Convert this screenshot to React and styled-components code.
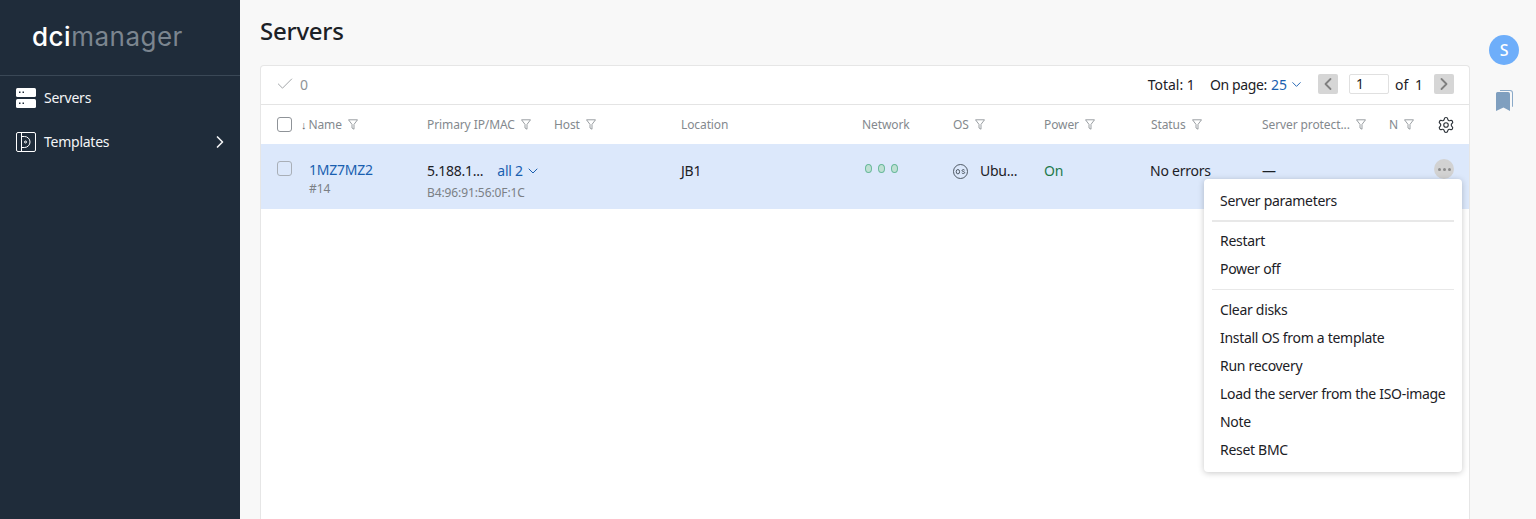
import React from 'react'
import styled, { createGlobalStyle } from 'styled-components'
import { Check, ChevronDown, ChevronLeft, ChevronRight, Settings } from 'lucide-react'

const GlobalStyle = createGlobalStyle`
    html, body {
        margin: 0;
        height: 100%;
        overflow: hidden;
    }
    body {
        font-family: "Noto Sans", "Open Sans", sans-serif;
        font-size: 14px;
        letter-spacing: -0.25px;
        color: #1c2126;
        background: #f8f8f8;
    }
    #root { height: 100%; }
`

const Page = styled.div`
    display: flex;
    height: 519px;
`

const Sidebar = styled.aside`
    width: 240px;
    flex-shrink: 0;
    background: #1f2c3a;
    color: #fff;
`

const LogoBox = styled.div`
    height: 76px;
    padding-left: 32px;
    box-sizing: border-box;
    border-bottom: 1px solid #3a4856;
    font-family: "Inter", sans-serif;
    font-size: 26px;
    font-weight: 500;
    line-height: 73px;
    letter-spacing: 0.5px;
`

const LogoDim = styled.span`
    color: #7b858f;
    font-weight: 400;
`

const NavList = styled.nav`
    display: flex;
    flex-direction: column;
`

const NavItem = styled.div`
    display: flex;
    align-items: center;
    height: 44px;
    padding: 0 10px 0 16px;
    gap: 8px;
    font-size: 14px;
    color: #f4f5f6;
`

const NavLabel = styled.span`
    flex: 1;
    padding-bottom: 2px;
`

const Main = styled.main`
    flex: 1;
    min-width: 0;
    display: flex;
    flex-direction: column;
    padding: 0 0 0 20px;
`

const Title = styled.h1`
    margin: 0;
    height: 65px;
    font-size: 24px;
    font-weight: 500;
    line-height: 62px;
    color: #1c2126;
`

const Card = styled.section`
    position: relative;
    flex: 1;
    background: #fff;
    border: 1px solid #e6e6e6;
    border-bottom: 0;
    border-radius: 4px 4px 0 0;
`

const Toolbar = styled.div`
    display: flex;
    align-items: center;
    height: 36px;
    padding: 0 15px 2px 14px;
    border-bottom: 1px solid #e4e4e4;
    letter-spacing: 0;
`

const Selected = styled.div`
    display: flex;
    align-items: center;
    gap: 5px;
    flex: 1;
    color: #8f9498;
    font-size: 14px;
`

const Pager = styled.div`
    display: flex;
    align-items: center;
    font-size: 14px;
`

const Total = styled.span`
    margin-right: 15px;
`

const OnPage = styled.span`
    letter-spacing: -0.35px;
`

const PerPage = styled.span`
    display: flex;
    align-items: center;
    gap: 2px;
    margin: 0 14px 0 4px;
    color: #1a5fb0;
`

const PageBtn = styled.span`
    display: flex;
    align-items: center;
    justify-content: center;
    width: 20px;
    height: 20px;
    border-radius: 2px;
    background: #d6d6d6;
    color: #808080;
`

const PageInput = styled.span`
    width: 40px;
    height: 20px;
    margin: 0 6px 0 11px;
    padding-left: 6px;
    box-sizing: border-box;
    border: 1px solid #e0e0e0;
    border-radius: 2px;
    line-height: 18px;
`

const OfText = styled.span`
    margin-right: 11px;
    word-spacing: 3px;
`

const Columns = styled.div`
    display: grid;
    grid-template-columns: 40px 126px 127px 127px 181px 91px 91px 107px 111px 127px 49px 1fr;
`

const HeadRow = styled(Columns)`
    height: 39px;
    align-items: center;
    color: #84898e;
    font-size: 12px;
    letter-spacing: -0.1px;
`

const HeadCell = styled.div`
    display: flex;
    align-items: center;
    gap: 6px;
    white-space: nowrap;
`

const GearCell = styled(HeadCell)`
    margin-left: -1px;
`

const SortArrow = styled.span`
    margin-right: -4px;
    font-size: 11px;
    color: #5f6469;
`

const BoxCell = styled.div`
    display: flex;
    justify-content: flex-start;
    padding-left: 16px;
`

const CheckBox = styled.span`
    display: block;
    width: 13px;
    height: 13px;
    border: 1px solid ${p => p.$soft ? '#a9afb7' : '#8f9398'};
    border-radius: 3px;
`

const DataRow = styled(Columns)`
    height: 65px;
    background: #dce8fb;
    font-size: 14px;
`

const Cell = styled.div`
    padding-top: ${p => p.$top || 17}px;
    margin-left: ${p => p.$shift || 0}px;
    white-space: nowrap;
    box-sizing: border-box;
`

const NameLink = styled.div`
    color: #1a5fb0;
    padding-left: 8px;
`

const Sub = styled.div`
    margin-top: ${p => p.$gap}px;
    padding-left: ${p => p.$pad || 0}px;
    font-size: 12px;
    letter-spacing: -0.1px;
    color: #7b8085;
`

const IpLine = styled.div`
    display: flex;
    align-items: center;
    gap: 14px;
`

const AllLink = styled.span`
    display: flex;
    align-items: center;
    gap: 2px;
    color: #1a5fb0;
`

const NetDots = styled.div`
    display: flex;
    gap: 6px;
    padding: 3px 0 0 3px;
`

const NetDot = styled.span`
    width: 7px;
    height: 9px;
    box-sizing: border-box;
    border: 1.5px solid #69b99a;
    border-radius: 50%;
    background: #bfe0d3;
`

const OsLine = styled.div`
    display: flex;
    gap: 12px;

    svg {
        margin-top: 3px;
    }
`

const OnText = styled.span`
    color: #1f7a4b;
`

const DotsBtn = styled.span`
    display: flex;
    align-items: center;
    justify-content: center;
    gap: 2px;
    width: 20px;
    height: 20px;
    margin-top: -2px;
    border-radius: 50%;
    background: #d2d2d2;
`

const Dot = styled.span`
    width: 3px;
    height: 3px;
    border-radius: 50%;
    background: #8b8b8b;
`

const Menu = styled.div`
    position: absolute;
    top: 113px;
    left: 943px;
    width: 258px;
    height: 293px;
    padding-top: 8px;
    box-sizing: border-box;
    background: #fff;
    border-radius: 4px;
    box-shadow: 0 1px 6px rgba(0, 0, 0, 0.22);
    letter-spacing: -0.3px;
`

const MenuItem = styled.div`
    height: 28px;
    padding-left: 16px;
    line-height: 28px;
    font-size: 14px;
    white-space: nowrap;
`

const MenuLine = styled.div`
    height: 1.5px;
    margin: 5.4px 8px 5.5px;
    background: #e8e8e8;
`

const Rail = styled.aside`
    width: 66px;
    flex-shrink: 0;
    display: flex;
    flex-direction: column;
    align-items: center;
    box-sizing: border-box;
    padding: 35px 0 0 2px;
    gap: 25px;
`

const Avatar = styled.div`
    width: 30px;
    height: 30px;
    border-radius: 50%;
    background: #6eaefa;
    color: #fff;
    font-size: 16px;
    font-weight: 500;
    line-height: 30px;
    text-align: center;
`

const FilterIcon = () => (
    <svg width="10" height="11" viewBox="0 0 10 11" fill="none" stroke="#8f9498" strokeWidth="0.9">
        <path d="M0.5 0.8h9L6 5.4v4.8L4 9V5.4z" />
    </svg>
)

const ServerIcon = () => (
    <svg width="20" height="20" viewBox="0 0 20 20">
        <rect y="0" width="20" height="9" rx="1.5" fill="#fff" />
        <rect y="11" width="20" height="9" rx="1.5" fill="#fff" />
        <g fill="#1f2c3a">
            <rect x="3" y="3.5" width="1.5" height="1.5" />
            <rect x="6.5" y="3.5" width="1.5" height="1.5" />
            <rect x="3" y="14.5" width="1.5" height="1.5" />
            <rect x="6.5" y="14.5" width="1.5" height="1.5" />
        </g>
    </svg>
)

const TemplateIcon = () => (
    <svg width="20" height="20" viewBox="0 0 20 20" fill="none" stroke="#fff" strokeWidth="1">
        <rect x="0.5" y="0.5" width="19" height="19" rx="1.5" />
        <path d="M5.5 0.5v19" />
        <path d="M5.5 4.5h3a5.5 5.5 0 0 1 0 11h-3" />
        <circle cx="9.5" cy="10" r="1" />
    </svg>
)

const OsIcon = () => (
    <svg width="15" height="15" viewBox="0 0 15 15" fill="none" stroke="#3f4954" strokeWidth="0.9">
        <circle cx="7.5" cy="7.5" r="7" />
        <ellipse cx="4.9" cy="7.7" rx="1.7" ry="2.2" />
        <path d="M11.6 6.2c-.4-.8-2.6-.9-2.6.4 0 1.2 2.700.7 2.700 2 0 1.200-2.400 1.200-2.900.2" />
    </svg>
)

const BookmarkIcon = () => (
    <svg width="18" height="21" viewBox="0 0 18 21">
        <path d="M5 0h10a3 3 0 0 1 3 3v14l-1 -0.5V3a2 2 0 0 0-2-2H5z" fill="#8aa9c8" />
        <path d="M2.500 2h10.500a2 2 0 0 1 2 2v17l-6.500-3.500L1 21V3.500A1.500 1.500 0 0 1 2.500 2z" fill="#7f9fbf" />
    </svg>
)

const headers = ['Primary IP/MAC', 'Host', 'Location', 'Network', 'OS', 'Power', 'Status', 'Server protect...', 'N']
const noFilter = ['Location', 'Network']
const menuGroups = [
    ['Server parameters'],
    ['Restart', 'Power off'],
    ['Clear disks', 'Install OS from a template', 'Run recovery', 'Load the server from the ISO-image', 'Note', 'Reset BMC'],
]

const App = () => (
    <Page>
        <GlobalStyle />
        <Sidebar>
            <LogoBox>dci<LogoDim>manager</LogoDim></LogoBox>
            <NavList>
                <NavItem>
                    <ServerIcon />
                    <NavLabel>Servers</NavLabel>
                </NavItem>
                <NavItem>
                    <TemplateIcon />
                    <NavLabel>Templates</NavLabel>
                    <ChevronRight size={20} strokeWidth={2} />
                </NavItem>
            </NavList>
        </Sidebar>
        <Main>
            <Title>Servers</Title>
            <Card>
                <Toolbar>
                    <Selected><Check size={20} strokeWidth={1} />0</Selected>
                    <Pager>
                        <Total>Total: 1</Total>
                        <OnPage>On page:</OnPage>
                        <PerPage>25 <ChevronDown size={15} strokeWidth={1.5} /></PerPage>
                        <PageBtn><ChevronLeft size={20} strokeWidth={2.2} /></PageBtn>
                        <PageInput>1</PageInput>
                        <OfText>of 1</OfText>
                        <PageBtn><ChevronRight size={20} strokeWidth={2.2} /></PageBtn>
                    </Pager>
                </Toolbar>
                <HeadRow>
                    <BoxCell><CheckBox /></BoxCell>
                    <HeadCell><SortArrow>↓</SortArrow>Name <FilterIcon /></HeadCell>
                    {headers.map(h => (
                        <HeadCell key={h}>{h}{!noFilter.includes(h) && <FilterIcon />}</HeadCell>
                    ))}
                    <GearCell><Settings size={18} strokeWidth={1.5} color="#2c3238" /></GearCell>
                </HeadRow>
                <DataRow>
                    <BoxCell><Cell><CheckBox $soft /></Cell></BoxCell>
                    <Cell $top={16}>
                        <NameLink>1MZ7MZ2</NameLink>
                        <Sub $pad={8} $gap={1}>#14</Sub>
                    </Cell>
                    <Cell>
                        <IpLine>5.188.1... <AllLink>all 2 <ChevronDown size={16} strokeWidth={1.5} /></AllLink></IpLine>
                        <Sub $gap={4}>B4:96:91:56:0F:1C</Sub>
                    </Cell>
                    <Cell />
                    <Cell>JB1</Cell>
                    <Cell>
                        <NetDots><NetDot /><NetDot /><NetDot /></NetDots>
                    </Cell>
                    <Cell><OsLine><OsIcon /> Ubu...</OsLine></Cell>
                    <Cell><OnText>On</OnText></Cell>
                    <Cell $shift={-1}>No errors</Cell>
                    <Cell>—</Cell>
                    <Cell />
                    <Cell $shift={-4}><DotsBtn><Dot /><Dot /><Dot /></DotsBtn></Cell>
                </DataRow>
                <Menu>
                    {menuGroups.map((group, i) => (
                        <React.Fragment key={i}>
                            {i > 0 && <MenuLine />}
                            {group.map(item => <MenuItem key={item}>{item}</MenuItem>)}
                        </React.Fragment>
                    ))}
                </Menu>
            </Card>
        </Main>
        <Rail>
            <Avatar>S</Avatar>
            <BookmarkIcon />
        </Rail>
    </Page>
)

export default App
